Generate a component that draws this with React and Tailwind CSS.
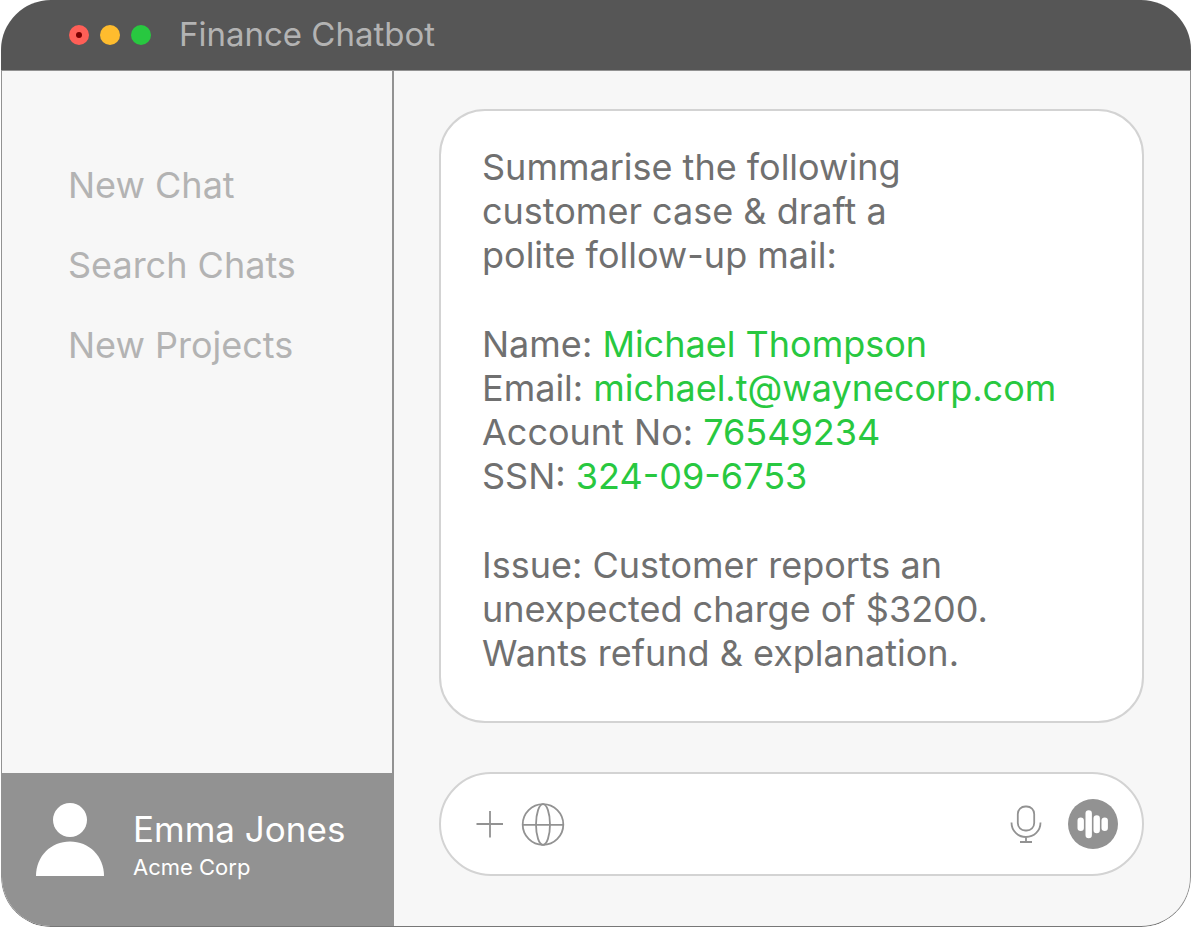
import React, { useState } from 'react';

const navItems = ['New Chat', 'Search Chats', 'New Projects'];

const details = [
    { label: 'Name', value: 'Michael Thompson' },
    { label: 'Email', value: 'michael.t@waynecorp.com' },
    { label: 'Account No', value: '76549234' },
    { label: 'SSN', value: '324-09-6753' },
];

const TitleBar = () => (
    <header className="h-[70px] shrink-0 bg-[#565656] flex items-center pl-[68px]">
        <div className="flex items-center gap-[11px]">
            <button aria-label="Close" className="w-5 h-5 rounded-full bg-[#ff5f57] flex items-center justify-center">
                <span className="w-1.5 h-1.5 rounded-full bg-[#7a0000]" />
            </button>
            <button aria-label="Minimise" className="w-5 h-5 rounded-full bg-[#febc2e]" />
            <button aria-label="Maximise" className="w-5 h-5 rounded-full bg-[#28c840]" />
        </div>
        <h1 className="pl-7 pb-0.5 text-[33px] leading-[44px] text-[#b3b3b3]">Finance Chatbot</h1>
    </header>
);

const Sidebar = () => (
    <aside className="w-[392px] shrink-0 flex flex-col border-r-2 border-[#929292]">
        <nav className="flex-1 flex flex-col items-start gap-9 pt-[92px] pl-[66px]">
            {navItems.map((item) => (
                <button key={item} className="text-[36px] leading-[44px] text-[#b3b3b3]">{item}</button>
            ))}
        </nav>
        <div className="h-[153px] bg-[#929292] flex items-start gap-7 pt-[30px] pl-[33px] text-white">
            <svg className="w-[70px] h-[74px]" viewBox="0 0 70 74" fill="currentColor">
                <circle cx="35" cy="17" r="17" />
                <path d="M1 73C1 53 16 38.500 35 38.500S69 53 69 73Z" />
            </svg>
            <div className="pt-1">
                <p className="text-[35px] leading-[44px]">Emma Jones</p>
                <p className="text-[22px] leading-[32px]">Acme Corp</p>
            </div>
        </div>
    </aside>
);

const Message = () => (
    <article className="flex-1 bg-white border-2 border-[#d3d3d3] rounded-[46px] pl-[41px] pr-8 pt-[34px] pb-[46px] text-[36px] leading-[44px] text-[#707070]">
        <p>
            Summarise the following<br />
            customer case &amp; draft a<br />
            polite follow-up mail:
        </p>
        <ul className="my-[45px]">
            {details.map((d) => (
                <li key={d.label}>
                    {d.label}: <span className="text-[#28c840]">{d.value}</span>
                </li>
            ))}
        </ul>
        <p>
            Issue: Customer reports an<br />
            unexpected charge of $3200.<br />
            Wants refund &amp; explanation.
        </p>
    </article>
);

const Composer = () => {
    const [text, setText] = useState('');

    return (
        <form
            onSubmit={(e) => e.preventDefault()}
            className="h-[104px] shrink-0 bg-white border-2 border-[#d3d3d3] rounded-full flex items-center pl-[34px] pr-6 text-[#929292]"
        >
            <button type="button" aria-label="Add attachment">
                <svg className="w-[30px] h-[30px]" viewBox="0 0 30 30" fill="none" stroke="currentColor" strokeWidth="1.8">
                    <path d="M15 2V28.500M1.500 15H28" />
                </svg>
            </button>
            <button type="button" aria-label="Search the web" className="ml-4">
                <svg className="w-11 h-11" viewBox="0 0 44 44" fill="none" stroke="currentColor" strokeWidth="1.8">
                    <circle cx="22" cy="22.500" r="20.300" />
                    <ellipse cx="22" cy="22.500" rx="7" ry="20.300" />
                    <path d="M1.700 22.800H42.300" />
                </svg>
            </button>
            <input
                aria-label="Message"
                value={text}
                onChange={(e) => setText(e.target.value)}
                className="flex-1 min-w-0 mx-5 h-[44px] text-[36px] text-[#707070] outline-none"
            />
            <button type="button" aria-label="Dictate">
                <svg className="w-8 h-[40px]" viewBox="0 0 32 40" fill="none" stroke="currentColor" strokeWidth="1.800">
                    <rect x="7.800" y="2.500" width="16.400" height="24" rx="7.500" />
                    <path d="M1.500 18.500C1.500 27 8 33 16 33S30.500 27 30.500 18.500M16 33V38M10 38H22" />
                </svg>
            </button>
            <button type="button" aria-label="Voice mode" className="ml-[26px] w-[50px] h-[50px] rounded-full bg-[#929292] text-white">
                <svg className="w-[50px] h-[50px]" viewBox="0 0 50 50" fill="currentColor">
                    <rect x="9.500" y="18.500" width="6.400" height="13.500" rx="3.200" />
                    <rect x="17.500" y="11.200" width="6.400" height="28" rx="3.200" />
                    <rect x="25.500" y="16.200" width="6.400" height="18" rx="3.200" />
                    <rect x="33.500" y="18.500" width="6.400" height="13.500" rx="3.200" />
                </svg>
            </button>
        </form>
    );
};

const App = () => {
    return (
        <div className="min-h-screen bg-white px-px flex font-['Inter',sans-serif]">
            <div className="flex-1 flex flex-col rounded-[50px] overflow-hidden bg-[#f7f7f7]">
                <TitleBar />
                <div className="flex-1 flex border border-b-[#777777] border-[#929292] rounded-b-[50px] overflow-hidden">
                    <Sidebar />
                    <main className="flex-1 min-w-0 flex flex-col gap-[49px] pt-[38px] pb-[50px] pl-[45px] pr-[46px]">
                        <Message />
                        <Composer />
                    </main>
                </div>
            </div>
        </div>
    );
};

export default App;
